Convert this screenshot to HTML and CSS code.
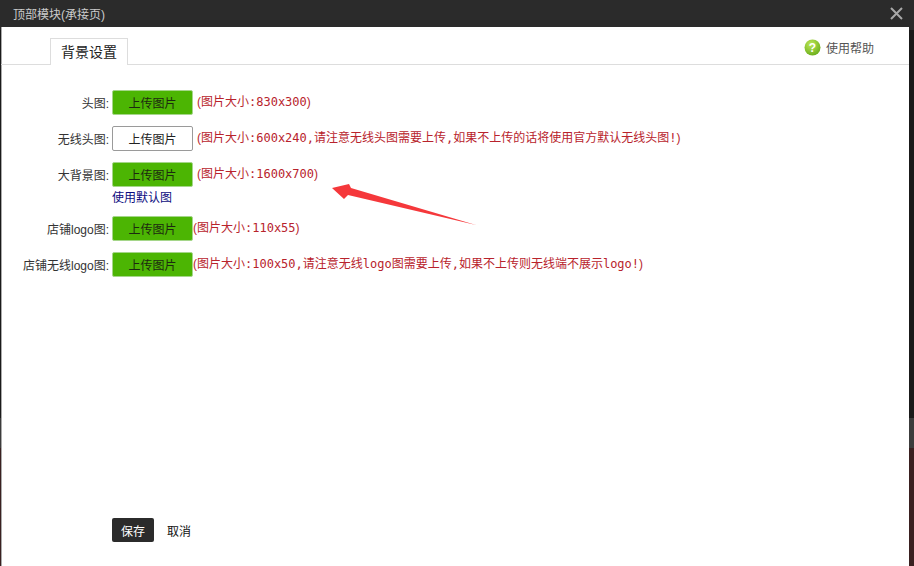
FILE: index.html
```html
<!DOCTYPE html>
<html lang="zh">
<head>
<meta charset="utf-8">
<title>顶部模块(承接页)</title>
<link rel="stylesheet" href="styles.css">
</head>
<body>
<div class="dialog">
  <header class="titlebar">
    <span class="title">顶部模块(承接页)</span>
    <svg class="close" width="13" height="13" viewBox="0 0 13 13"><path d="M1 1L12 12M12 1L1 12" stroke="#a8a8a8" stroke-width="2" fill="none"/></svg>
  </header>
  <main class="panel">
    <nav class="tabs">
      <div class="tab">背景设置</div>
      <a class="help">
        <svg width="17" height="17" viewBox="0 0 17 17"><defs><radialGradient id="g" cx="0.4" cy="0.3" r="0.8"><stop offset="0" stop-color="#c0e858"/><stop offset="1" stop-color="#62a816"/></radialGradient></defs><circle cx="8.5" cy="8.500" r="8" fill="url(#g)"/><text x="8.5" y="13" text-anchor="middle" class="qmark">?</text></svg>
        <span>使用帮助</span>
      </a>
    </nav>
    <form class="form">
      <div class="row">
        <label class="label">头图:</label>
        <button type="button" class="upload">上传图片</button>
        <span class="hint"><span class="paren">(</span>图片大小:830x300<span class="paren">)</span></span>
      </div>
      <div class="row">
        <label class="label">无线头图:</label>
        <button type="button" class="upload plain">上传图片</button>
        <span class="hint"><span class="paren">(</span>图片大小:600x240,请注意无线头图需要上传,如果不上传的话将使用官方默认无线头图!<span class="paren">)</span></span>
      </div>
      <div class="row">
        <label class="label">大背景图:</label>
        <button type="button" class="upload">上传图片</button>
        <span class="hint"><span class="paren">(</span>图片大小:1600x700<span class="paren">)</span></span>
      </div>
      <a class="default-link">使用默认图</a>
      <div class="row">
        <label class="label">店铺logo图:</label>
        <button type="button" class="upload">上传图片</button>
        <span class="hint tight"><span class="paren">(</span>图片大小:110x55<span class="paren">)</span></span>
      </div>
      <div class="row">
        <label class="label">店铺无线logo图:</label>
        <button type="button" class="upload">上传图片</button>
        <span class="hint tight"><span class="paren">(</span>图片大小:100x50,请注意无线logo图需要上传,如果不上传则无线端不展示logo!<span class="paren">)</span></span>
      </div>
    </form>
    <div class="actions">
      <button type="button" class="save">保存</button>
      <button type="button" class="cancel">取消</button>
    </div>
    <svg class="arrow" width="150" height="50" viewBox="0 0 150 50"><path d="M1 5L18 1L20 5L145 42L17 12L13 16Z" fill="#f5383b"/></svg>
  </main>
</div>
</body>
</html>
```
FILE: styles.css
```css
* { box-sizing: border-box; }
html, body { margin: 0; height: 100%; }
body {
  width: 914px;
  height: 566px;
  overflow: hidden;
  background: linear-gradient(to bottom, #2b2b2b 0 30px, #1a1a1a 30px 418px, #3c3c3c 418px 448px, #3a2020 448px 566px);
  font-family: "Liberation Sans", "Noto Sans CJK SC", sans-serif;
  font-size: 12px;
  color: #333;
}
.dialog { display: flex; flex-direction: column; height: 566px; }
.titlebar {
  height: 27px;
  flex: none;
  display: flex;
  align-items: center;
  justify-content: space-between;
  padding: 0 11px 0 13px;
  background: #2b2b2b;
}
.title { color: #ccc; font-size: 12px; }
.panel {
  position: relative;
  flex: 1;
  margin: 0 5px 0 1px;
  background: #fff;
  box-shadow: inset 1px 0 0 #aaa;
  display: flex;
  flex-direction: column;
}
.tabs {
  height: 38px;
  flex: none;
  display: flex;
  align-items: flex-end;
  justify-content: space-between;
  padding: 0 35px 0 49px;
  border-bottom: 1px solid #ddd;
}
.tab {
  width: 78px;
  height: 27px;
  margin-bottom: -1px;
  background: #fff;
  border: 1px solid #ddd;
  border-bottom: 0;
  font-size: 14px;
  color: #222;
  text-align: center;
  line-height: 26px;
}
.help {
  display: flex;
  align-items: center;
  gap: 5px;
  height: 17px;
  margin-bottom: 8px;
  color: #555;
}
.qmark { font: bold 12px "Liberation Sans", sans-serif; fill: #fff; }
.form {
  display: flex;
  flex-direction: column;
  padding-top: 25px;
}
.row { display: flex; align-items: flex-start; height: 25px; margin-bottom: 11px; }
.label {
  width: 111px;
  padding-right: 3px;
  text-align: right;
  line-height: 28px;
  color: #333;
  white-space: nowrap;
}
.upload {
  width: 81px;
  height: 25px;
  padding: 0;
  border: 1px solid #a5d68a;
  border-radius: 2px;
  background: #4cb503;
  color: #1c2a10;
  font: 12px "Liberation Sans", "Noto Sans CJK SC", sans-serif;
}
.upload.plain { background: #fff; border-color: #9a9a9a; color: #222; }
.hint {
  margin-left: 4px;
  line-height: 25px;
  color: #b8232c;
  white-space: nowrap;
  font-family: "DejaVu Sans Mono", "Noto Sans CJK SC", monospace;
  font-size: 12px;
}
.hint.tight { margin-left: 0; }
.paren { font-family: "Liberation Sans", sans-serif; }
.default-link {
  margin: -9px 0 9px 111px;
  height: 18px;
  line-height: 18px;
  color: #0b0b80;
}
.actions {
  position: absolute;
  left: 111px;
  top: 491px;
  display: flex;
  align-items: center;
  gap: 13px;
}
.save {
  width: 42px;
  height: 24px;
  padding: 0;
  border: 0;
  border-radius: 2px;
  background: #2b2b2b;
  color: #fff;
  font: 12px "Liberation Sans", "Noto Sans CJK SC", sans-serif;
}
.cancel {
  padding: 0;
  border: 0;
  background: none;
  color: #111;
  font: 12px "Liberation Sans", "Noto Sans CJK SC", sans-serif;
}
.arrow { position: absolute; left: 330px; top: 156px; }
```
